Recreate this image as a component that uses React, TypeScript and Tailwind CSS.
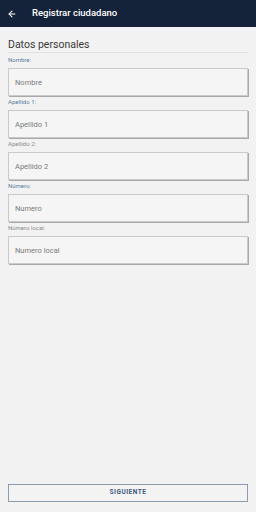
import { ArrowLeft } from 'lucide-react';

interface Field {
  label: string;
  placeholder: string;
  accent: boolean;
}

const fields: Field[] = [
  { label: 'Nombre:', placeholder: 'Nombre', accent: true },
  { label: 'Apellido 1:', placeholder: 'Apellido 1', accent: true },
  { label: 'Apellido 2:', placeholder: 'Apellido 2', accent: false },
  { label: 'Número:', placeholder: 'Numero', accent: true },
  { label: 'Número local:', placeholder: 'Numero local', accent: false },
];

export default function App() {
  return (
    <div className="flex flex-col w-[256px] h-[512px] bg-[#f2f2f2] font-['Roboto',sans-serif] overflow-hidden">
      <header className="flex items-center h-[27px] bg-[#14233a] text-white shrink-0">
        <ArrowLeft size={10} strokeWidth={2.5} className="ml-[7px]" />
        <h1 className="ml-[15px] text-[9.5px] font-medium">Registrar ciudadano</h1>
      </header>

      <main className="flex flex-col flex-1 px-2">
        <h2 className="mt-[11px] leading-[14px] text-[10.5px] text-[#3a3a3a]">Datos personales</h2>
        <div className="h-px bg-[#e2e2e2] mb-[3px]" />
        {fields.map((f) => (
          <div key={f.label} className="flex flex-col mb-[2px]">
            <label className={`h-[8px] leading-[8px] text-[6px] ${f.accent ? 'text-[#5a7ca0]' : 'text-[#8c8c8c]'}`}>{f.label}</label>
            <input
              placeholder={f.placeholder}
              className="mt-[4px] h-[28px] px-[6px] bg-[#f5f5f5] border border-[#c9c9c9] shadow-[1px_1px_0_#a9a9a9] text-[7.5px] text-[#444] placeholder:text-[#7a7a7a] outline-none"
            />
          </div>
        ))}

        <button className="mt-auto mb-[10px] h-[18px] border border-[#8d9cb0] bg-[#f3f3f3] text-[6.5px] font-bold tracking-[0.5px] text-[#3d5a80]">
          SIGUIENTE
        </button>
      </main>
    </div>
  );
}
